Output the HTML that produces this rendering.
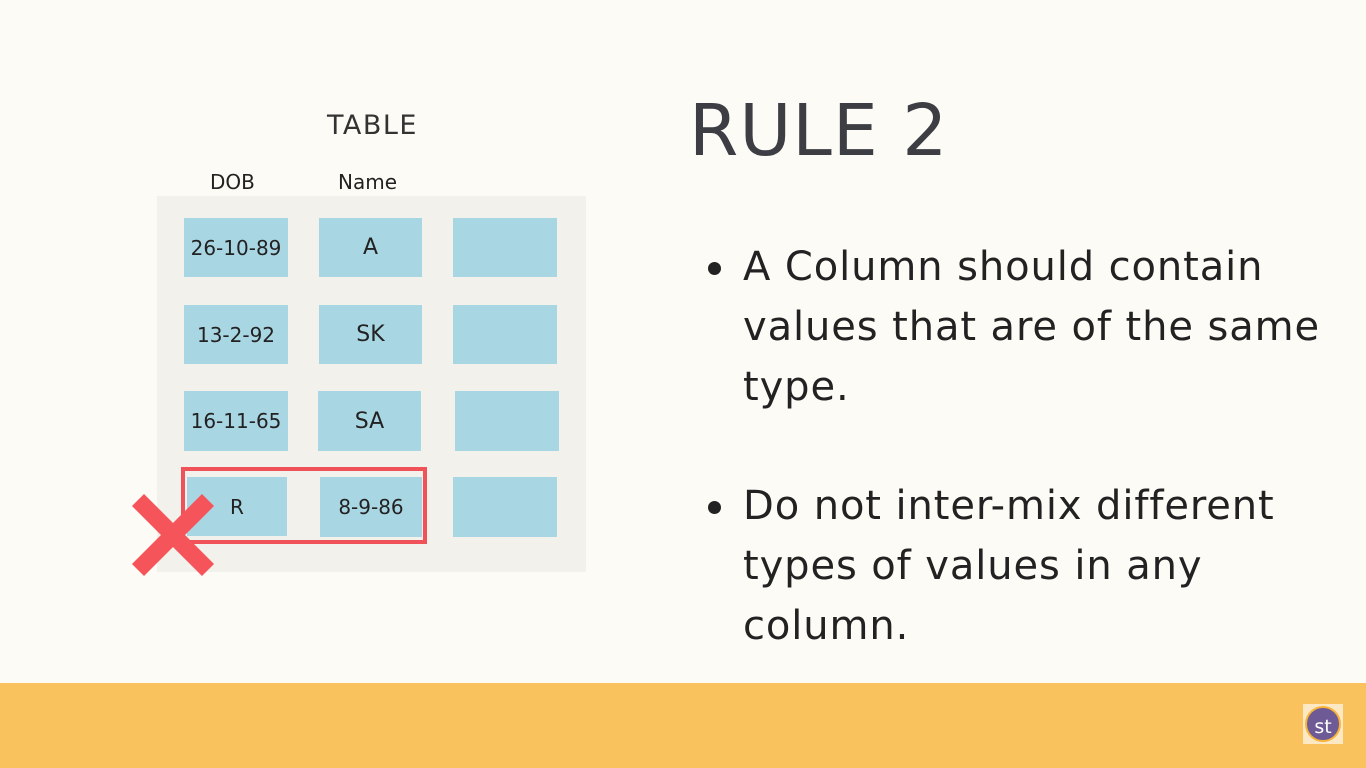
<!DOCTYPE html>
<html><head><meta charset="utf-8"><style>
*{margin:0;padding:0}
body{width:1366px;height:768px;background:#fdfbf6;position:relative;overflow:hidden;font-family:"DejaVu Sans","Liberation Sans",sans-serif;color:#222}
.a{position:absolute;white-space:nowrap}
.panel{position:absolute;left:157px;top:196px;width:429px;height:376px;background:#f2f1ec}
.c{position:absolute;background:#a9d6e3;display:flex;align-items:center;justify-content:center;font-size:20px;color:#222}
.band{position:absolute;left:0;top:683px;width:1366px;height:85px;background:#f9c25c}
.t{font-size:40px;color:#222;left:743px;letter-spacing:0.9px}
.dot{position:absolute;width:13px;height:13px;border-radius:50%;background:#222;left:708px}
</style></head><body>
<div class="a" style="left:327px;top:110px;font-size:27px;color:#333;letter-spacing:1.5px">TABLE</div>
<div class="a" style="left:210px;top:170px;font-size:20px;color:#222">DOB</div>
<div class="a" style="left:338px;top:170px;font-size:20px;color:#222">Name</div>
<div class="panel"></div>
<div class="c" style="left:184px;top:218px;width:104px;height:59px">26-10-89</div>
<div class="c" style="left:319px;top:218px;width:103px;height:59px;font-size:22px">A</div>
<div class="c" style="left:453px;top:218px;width:104px;height:59px"></div>
<div class="c" style="left:184px;top:305px;width:104px;height:59px">13-2-92</div>
<div class="c" style="left:319px;top:305px;width:103px;height:59px;font-size:22px">SK</div>
<div class="c" style="left:453px;top:305px;width:104px;height:59px"></div>
<div class="c" style="left:184px;top:391px;width:104px;height:60px">16-11-65</div>
<div class="c" style="left:318px;top:391px;width:103px;height:60px;font-size:22px">SA</div>
<div class="c" style="left:455px;top:391px;width:104px;height:60px"></div>
<div class="c" style="left:187px;top:477px;width:100px;height:59px">R</div>
<div class="c" style="left:320px;top:477px;width:102px;height:60px">8-9-86</div>
<div class="c" style="left:453px;top:477px;width:104px;height:60px"></div>
<div style="position:absolute;left:181px;top:467px;width:238px;height:69px;border:4px solid #f0525a"></div>
<svg style="position:absolute;left:128px;top:490px" width="90" height="90"><path d="M10 10L80 80M80 10L10 80" stroke="#f5545a" stroke-width="17"/></svg>
<div class="a" style="left:689px;top:89px;font-size:71px;color:#3d3d44;letter-spacing:1px">RULE 2</div>
<div class="dot" style="top:262px"></div>
<div class="a t" style="top:244px">A Column should contain</div>
<div class="a t" style="top:304px">values that are of the same</div>
<div class="a t" style="top:364px">type.</div>
<div class="dot" style="top:501px"></div>
<div class="a t" style="top:483px">Do not inter-mix different</div>
<div class="a t" style="top:543px">types of values in any</div>
<div class="a t" style="top:603px">column.</div>
<div class="band"></div>
<div style="position:absolute;left:1303px;top:704px;width:40px;height:40px;background:#fde8c4"></div>
<div style="position:absolute;left:1305px;top:706px;width:32px;height:32px;border-radius:50%;background:#6e5a94;border:2px solid #f7b43c;color:#fff;font-size:19px;display:flex;align-items:flex-end;justify-content:center;line-height:26px">st</div>
</body></html>
